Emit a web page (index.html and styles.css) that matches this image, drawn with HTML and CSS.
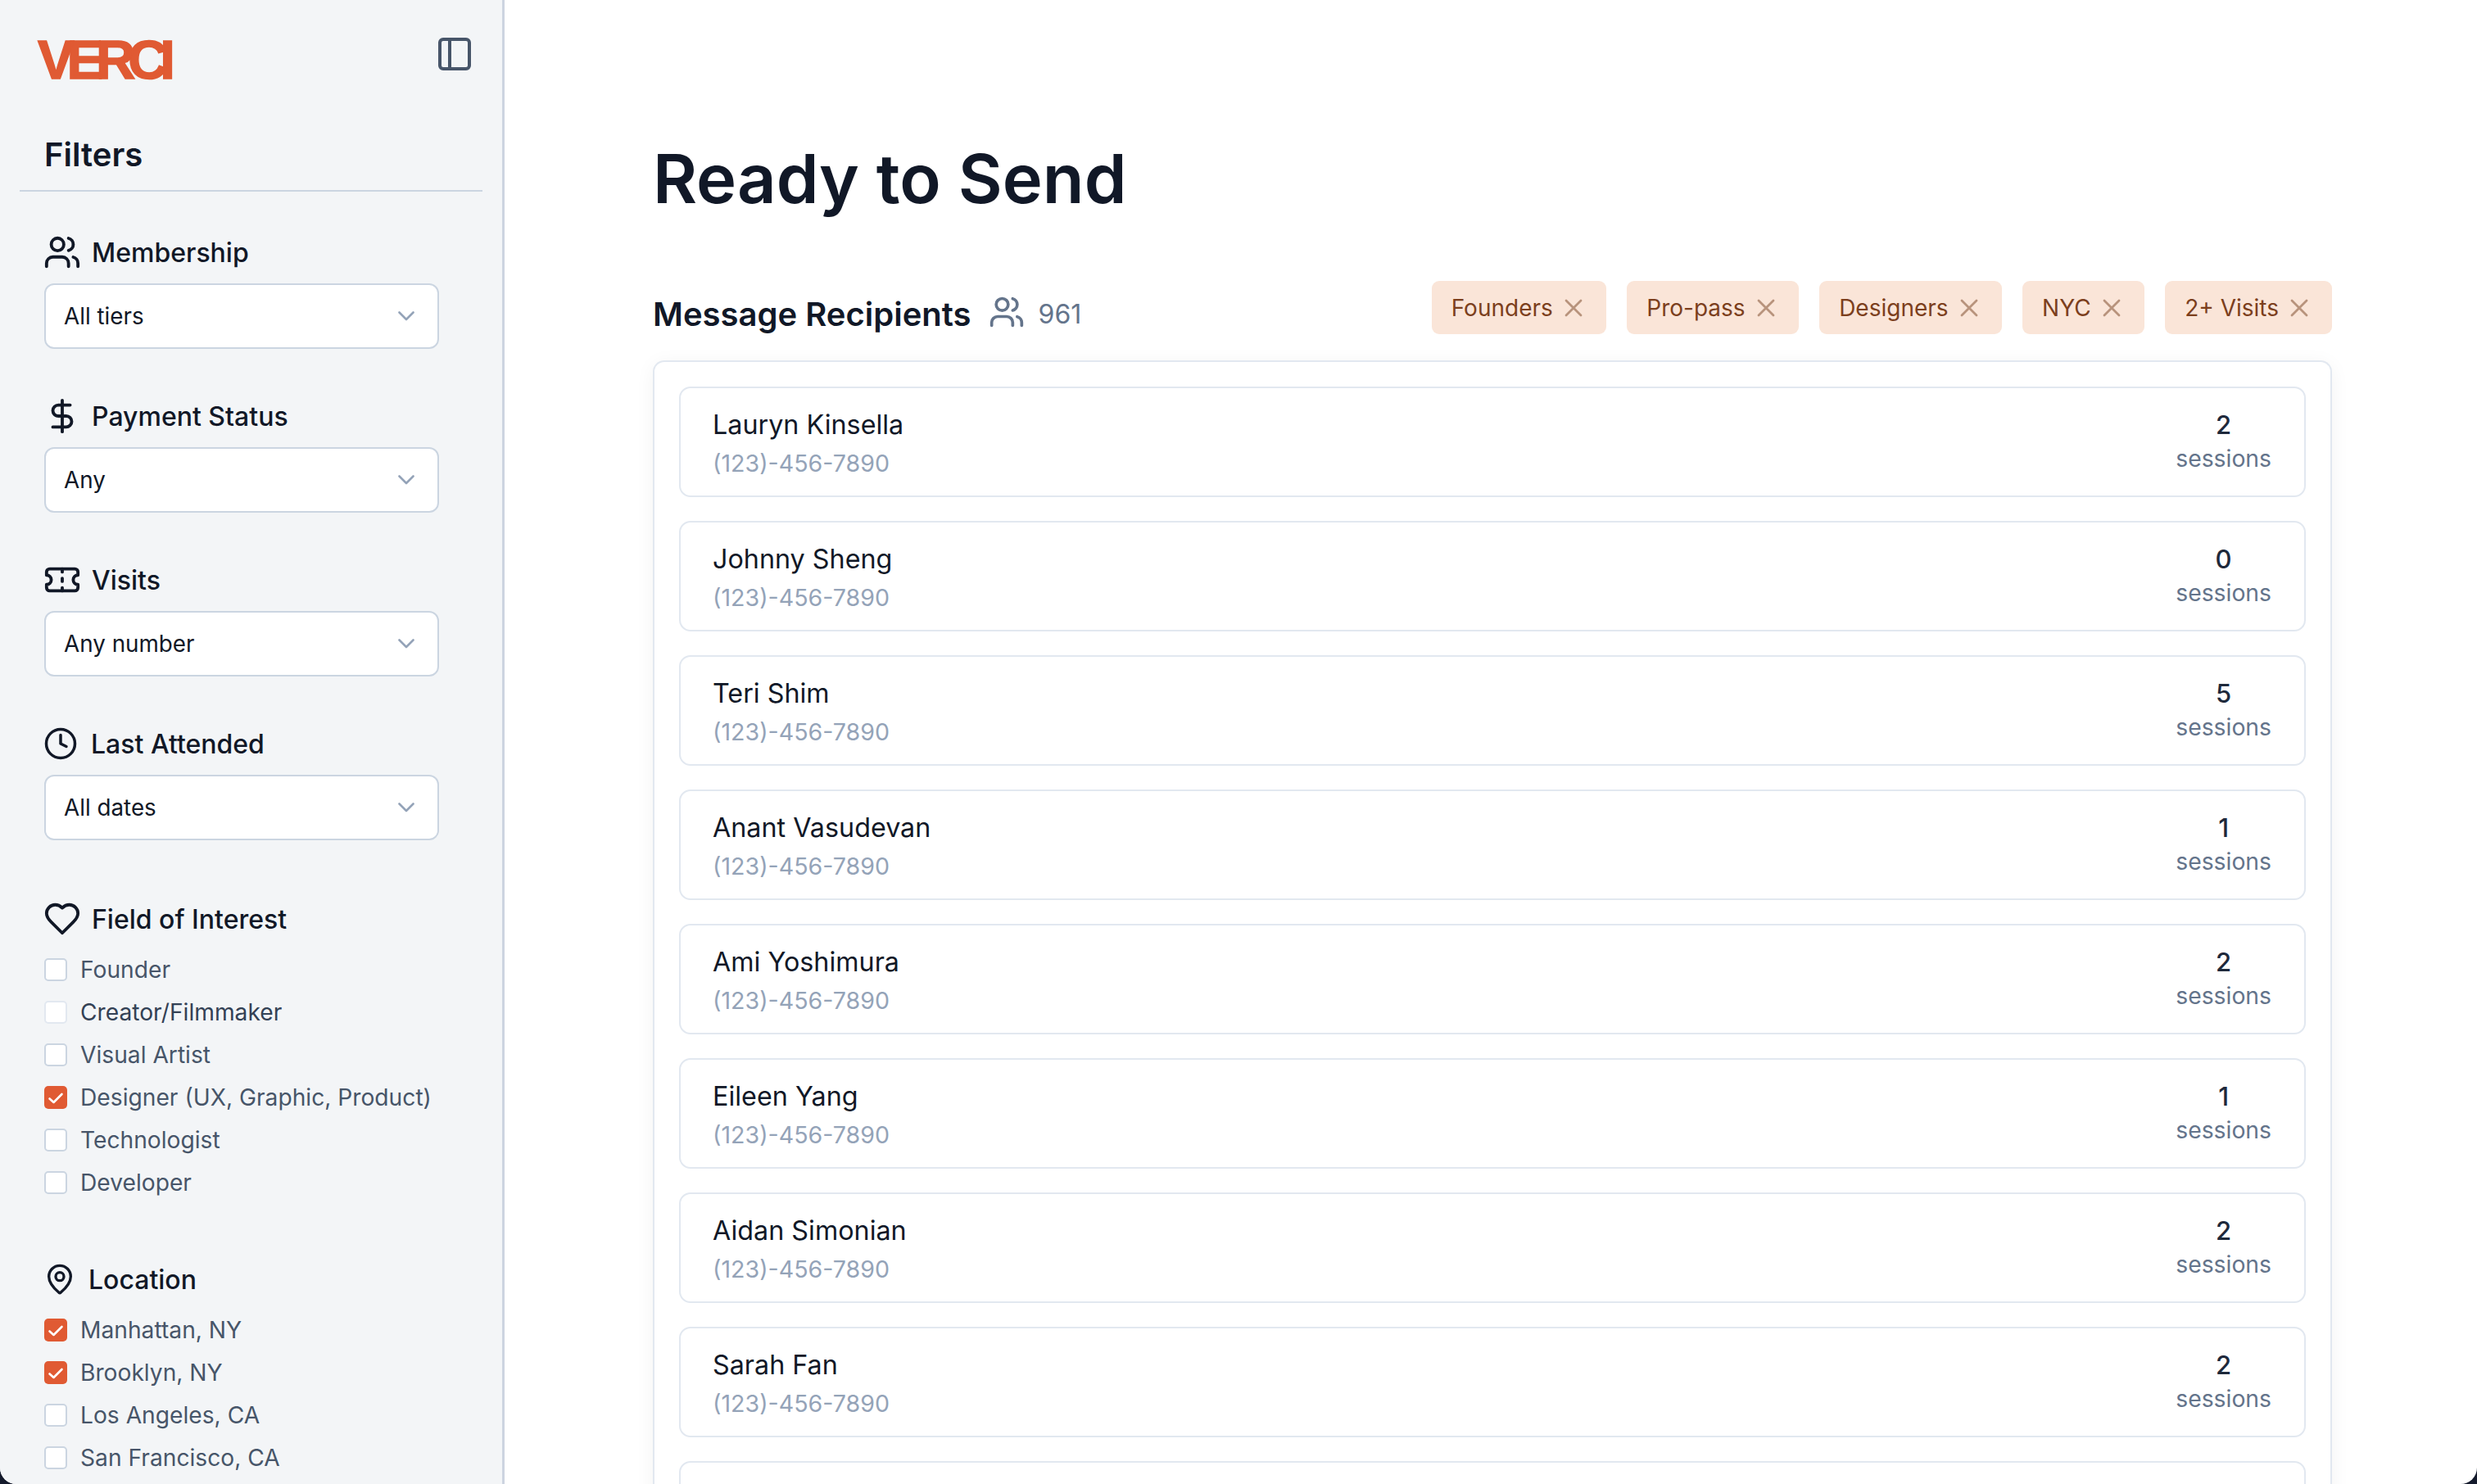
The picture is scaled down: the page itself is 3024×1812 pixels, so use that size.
FILE: index.html
```html
<!DOCTYPE html>
<html lang="en">
<head>
<meta charset="utf-8">
<title>Ready to Send</title>
<link rel="stylesheet" href="styles.css">
</head>
<body>
<div class="app">
  <aside class="sidebar">
    <div class="brand">
      <span class="logo">VERCI</span>
      <svg class="toggle" viewBox="0 0 24 24"><rect x="3" y="3" width="18" height="18" rx="2"/><path d="M9 3v18"/></svg>
    </div>
    <h2 class="filters-title">Filters</h2>

    <section class="group group-first">
      <div class="label"><svg class="ico" viewBox="0 0 24 24"><path d="M16 21v-2a4 4 0 0 0-4-4H6a4 4 0 0 0-4 4v2"/><circle cx="9" cy="7" r="4"/><path d="M22 21v-2a4 4 0 0 0-3-3.87"/><path d="M16 3.13a4 4 0 0 1 0 7.75"/></svg>Membership</div>
      <div class="select">All tiers<svg class="chev" viewBox="0 0 20 12"><path d="M1.5 1.5 10 10l8.5-8.5"/></svg></div>
    </section>
    <section class="group">
      <div class="label"><svg class="ico" viewBox="0 0 24 24"><path d="M12 2v20"/><path d="M17 5H9.5a3.5 3.5 0 0 0 0 7h5a3.5 3.5 0 0 1 0 7H6"/></svg>Payment Status</div>
      <div class="select">Any<svg class="chev" viewBox="0 0 20 12"><path d="M1.5 1.5 10 10l8.5-8.5"/></svg></div>
    </section>
    <section class="group">
      <div class="label"><svg class="ico" viewBox="0 0 24 24"><path d="M2 9a3 3 0 0 1 0 6v2a2 2 0 0 0 2 2h16a2 2 0 0 0 2-2v-2a3 3 0 0 1 0-6V7a2 2 0 0 0-2-2H4a2 2 0 0 0-2 2Z"/><path d="M12 5v2"/><path d="M12 17v2"/><path d="M12 11v2"/></svg>Visits</div>
      <div class="select">Any number<svg class="chev" viewBox="0 0 20 12"><path d="M1.5 1.5 10 10l8.5-8.5"/></svg></div>
    </section>
    <section class="group">
      <div class="label label-clock"><svg class="ico" viewBox="0 0 24 24"><circle cx="12" cy="12" r="10"/><path d="M12 6v6l4 2"/></svg>Last Attended</div>
      <div class="select">All dates<svg class="chev" viewBox="0 0 20 12"><path d="M1.5 1.5 10 10l8.5-8.5"/></svg></div>
    </section>

    <section class="group group-interest">
      <div class="label label-list"><svg class="ico" viewBox="0 0 24 24"><path d="M19 14c1.49-1.46 3-3.21 3-5.5A5.5 5.5 0 0 0 16.5 3c-1.76 0-3 .5-4.5 2-1.5-1.5-2.74-2-4.5-2A5.5 5.5 0 0 0 2 8.5c0 2.3 1.5 4.05 3 5.5l7 7Z"/></svg>Field of Interest</div>
      <ul class="checks">
        <li class="check"><span class="box"></span>Founder</li>
        <li class="check hover"><span class="box"></span>Creator/Filmmaker</li>
        <li class="check"><span class="box"></span>Visual Artist</li>
        <li class="check"><span class="box on"><svg viewBox="0 0 28 28"><path d="M6.5 15.5 11.5 20 21.5 10"/></svg></span>Designer (UX, Graphic, Product)</li>
        <li class="check"><span class="box"></span>Technologist</li>
        <li class="check"><span class="box"></span>Developer</li>
      </ul>
    </section>
    <section class="group group-location">
      <div class="label label-list label-pin"><svg class="ico" viewBox="0 0 24 24"><path d="M20 10c0 4.993-5.539 10.193-7.399 11.799a1 1 0 0 1-1.202 0C9.539 20.193 4 14.993 4 10a8 8 0 0 1 16 0"/><circle cx="12" cy="10" r="3"/></svg>Location</div>
      <ul class="checks">
        <li class="check"><span class="box on"><svg viewBox="0 0 28 28"><path d="M6.5 15.5 11.5 20 21.5 10"/></svg></span>Manhattan, NY</li>
        <li class="check"><span class="box on"><svg viewBox="0 0 28 28"><path d="M6.5 15.5 11.5 20 21.5 10"/></svg></span>Brooklyn, NY</li>
        <li class="check"><span class="box"></span>Los Angeles, CA</li>
        <li class="check"><span class="box"></span>San Francisco, CA</li>
      </ul>
    </section>
  </aside>

  <main class="main">
    <h1 class="title">Ready to Send</h1>
    <div class="head">
      <div class="head-left">
        <h2 class="head-title">Message Recipients</h2>
        <svg class="head-ico" viewBox="0 0 24 24"><path d="M16 21v-2a4 4 0 0 0-4-4H6a4 4 0 0 0-4 4v2"/><circle cx="9" cy="7" r="4"/><path d="M22 21v-2a4 4 0 0 0-3-3.87"/><path d="M16 3.13a4 4 0 0 1 0 7.75"/></svg>
        <span class="count">961</span>
      </div>
      <div class="chips">
        <span class="chip">Founders<svg viewBox="0 0 22 22"><path d="M2 2l18 18M20 2 2 20"/></svg></span>
        <span class="chip">Pro-pass<svg viewBox="0 0 22 22"><path d="M2 2l18 18M20 2 2 20"/></svg></span>
        <span class="chip">Designers<svg viewBox="0 0 22 22"><path d="M2 2l18 18M20 2 2 20"/></svg></span>
        <span class="chip">NYC<svg viewBox="0 0 22 22"><path d="M2 2l18 18M20 2 2 20"/></svg></span>
        <span class="chip">2+ Visits<svg viewBox="0 0 22 22"><path d="M2 2l18 18M20 2 2 20"/></svg></span>
      </div>
    </div>
    <div class="card">
      <div class="row"><div class="who"><div class="name">Lauryn Kinsella</div><div class="phone">(123)-456-7890</div></div><div class="stat"><div class="num">2</div><div class="unit">sessions</div></div></div>
      <div class="row"><div class="who"><div class="name">Johnny Sheng</div><div class="phone">(123)-456-7890</div></div><div class="stat"><div class="num">0</div><div class="unit">sessions</div></div></div>
      <div class="row"><div class="who"><div class="name">Teri Shim</div><div class="phone">(123)-456-7890</div></div><div class="stat"><div class="num">5</div><div class="unit">sessions</div></div></div>
      <div class="row"><div class="who"><div class="name">Anant Vasudevan</div><div class="phone">(123)-456-7890</div></div><div class="stat"><div class="num">1</div><div class="unit">sessions</div></div></div>
      <div class="row"><div class="who"><div class="name">Ami Yoshimura</div><div class="phone">(123)-456-7890</div></div><div class="stat"><div class="num">2</div><div class="unit">sessions</div></div></div>
      <div class="row"><div class="who"><div class="name">Eileen Yang</div><div class="phone">(123)-456-7890</div></div><div class="stat"><div class="num">1</div><div class="unit">sessions</div></div></div>
      <div class="row"><div class="who"><div class="name">Aidan Simonian</div><div class="phone">(123)-456-7890</div></div><div class="stat"><div class="num">2</div><div class="unit">sessions</div></div></div>
      <div class="row"><div class="who"><div class="name">Sarah Fan</div><div class="phone">(123)-456-7890</div></div><div class="stat"><div class="num">2</div><div class="unit">sessions</div></div></div>
      <div class="row"></div>
    </div>
  </main>
</div>
</body>
</html>
```
FILE: styles.css
```css
* { box-sizing: border-box; }
html, body { margin: 0; height: 100%; background: #141a2c; overflow: hidden; }
body { font-family: Inter, "Noto Sans", sans-serif; color: #111827; }
svg { display: block; fill: none; stroke: currentColor; stroke-linecap: round; stroke-linejoin: round; flex: none; }

.app { display: flex; width: 3024px; height: 1812px; overflow: hidden; background: #fff; border-radius: 0 0 20px 20px; }

.sidebar { width: 616px; flex: none; height: 1812px; overflow: hidden; background: #f3f5f7; border-right: 3px solid #cdd4e0; }
.brand { display: flex; justify-content: space-between; align-items: flex-start; height: 166px; padding: 42px 34px 0 46px; }
.logo { margin-top: 2px; font: 700 67px/58px "Liberation Sans", Arial, sans-serif; letter-spacing: -9.2px; color: #e05a33; -webkit-text-stroke: 1.5px #e05a33; }
.toggle { width: 48px; height: 48px; stroke-width: 2; color: #475569; }
.filters-title { margin: 0 24px 0 24px; padding: 0 0 20px 30px; font-size: 40px; line-height: 46px; font-weight: 600; border-bottom: 2px solid #cbd5e1; height: 68px; }

.group { padding-left: 54px; margin-top: 62px; }
.group-first { margin-top: 54px; }
.group-interest { margin-top: 76px; }
.group-location { margin-top: 72px; }
.label { display: flex; align-items: center; gap: 13px; height: 40px; padding-top: 2px; margin-bottom: 18px; font-size: 32px; font-weight: 500; line-height: 38px; color: #111827; }
.label-list { margin-bottom: 16px; }
.ico { width: 46px; height: 46px; stroke-width: 2; margin: -2px 0 0 -1px; }
.label-clock { gap: 16px; }
.label-clock .ico { width: 42px; height: 42px; }
.label-pin { gap: 15px; }
.label-pin .ico { width: 40px; height: 40px; }
.select { display: flex; justify-content: space-between; align-items: center; width: 482px; height: 80px; padding: 0 28px 0 22px; background: #fff; border: 2.5px solid #cbd5e1; border-radius: 12px; font-size: 27.8px; color: #111827; }
.chev { width: 20px; height: 12px; color: #94a3b8; stroke-width: 2.6; }

.checks { list-style: none; margin: 0; padding: 0; }
.check { display: flex; align-items: center; gap: 16px; height: 52px; font-size: 28.2px; color: #475569; }
.check.hover { color: #334155; }
.box { width: 28px; height: 28px; flex: none; background: #fff; border: 2px solid #cbd5e1; border-radius: 5px; }
.hover .box { border-color: #e2e8f0; }
.box.on { background: #e05a33; border: 0; }
.box.on svg { width: 28px; height: 28px; color: #fff; stroke-width: 2.6; }

.main { flex: 1; min-width: 0; padding: 176px 177px 0 181px; }
.title { margin: 0 0 83px; font-size: 83px; line-height: 84px; font-weight: 600; color: #111827; }
.head { display: flex; justify-content: space-between; align-items: flex-start; margin-bottom: 29px; }
.head-left { display: flex; align-items: center; padding-top: 14px; height: 68px; }
.head-title { margin: 0; font-size: 40px; line-height: 54px; font-weight: 600; }
.head-ico { width: 44px; height: 44px; stroke-width: 2; color: #64748b; margin: -6px 0 0 21px; }
.count { margin-left: 17px; font-size: 32px; line-height: 54px; color: #64748b; }
.chips { display: flex; gap: 25.5px; }
.chip { display: flex; align-items: center; gap: 14px; height: 65px; padding: 0 29px 0 24px; background: #fae5d8; border-radius: 9px; font-size: 28px; color: #7c3f1d; }
.chip svg { width: 22px; height: 22px; stroke-width: 2.8; color: #b8937c; }

.card { display: flex; flex-direction: column; gap: 29px; padding: 30px; background: #fff; border: 2px solid #e2e8f0; border-bottom: 0; border-radius: 14px 14px 0 0; box-shadow: 0 4px 24px rgba(15, 23, 42, .05); height: 1500px; }
.row { flex: none; display: flex; justify-content: space-between; align-items: flex-start; height: 135px; padding: 22px 40px 0 39px; border: 2px solid #e2e8f0; border-radius: 14px; }
.name { font-size: 32.3px; line-height: 46px; font-weight: 400; color: #111827; }
.phone { margin-top: 4px; font-size: 28.6px; line-height: 40px; color: #94a3b8; }
.stat { text-align: center; }
.num { font-size: 31px; line-height: 46px; font-weight: 500; color: #1e293b; }
.unit { font-size: 28.3px; line-height: 37px; color: #64748b; }
```
